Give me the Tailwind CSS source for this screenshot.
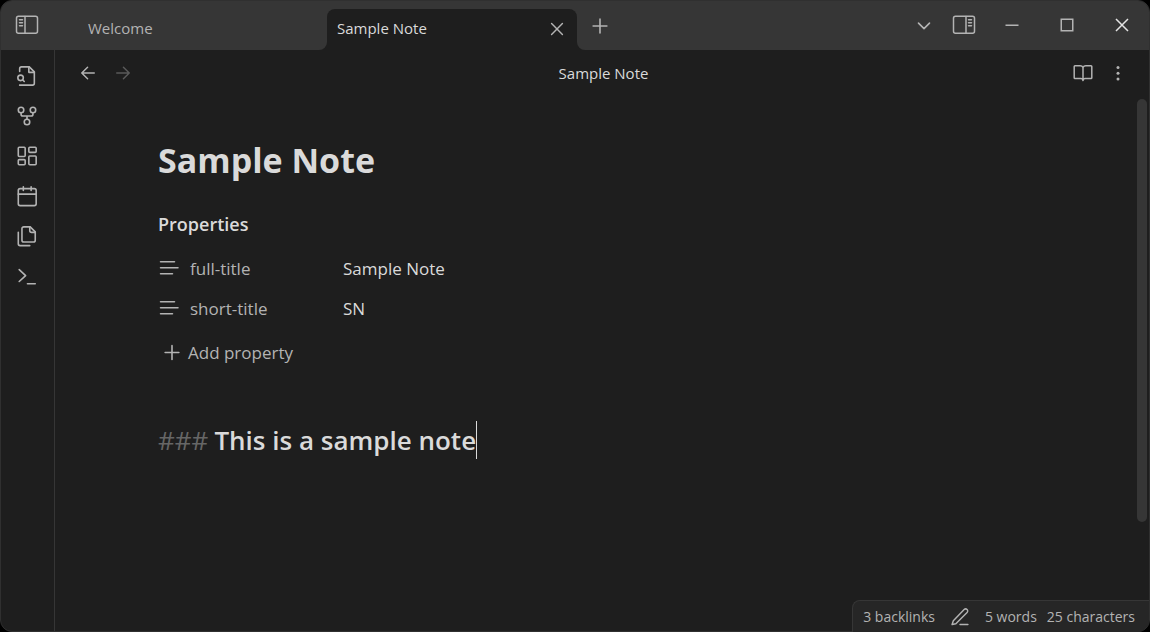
<!DOCTYPE html>
<html lang="en">
<head>
<meta charset="utf-8">
<meta name="viewport" content="width=device-width, initial-scale=1">
<title>Sample Note</title>
<script src="https://cdn.jsdelivr.net/npm/@tailwindcss/browser@4"></script>
</head>
<body class="bg-black font-['Open_Sans','Noto_Sans',sans-serif] text-[#dadada]">
<div class="flex min-h-screen flex-col overflow-hidden rounded-xl border border-[#303030] bg-[#1e1e1e]">

  <header class="flex h-[49px] shrink-0 bg-[#363636] text-[#b3b3b3]">
    <button type="button" aria-label="Collapse left sidebar" class="flex w-[52px] items-center justify-center pb-px">
      <svg class="h-5 w-6" viewBox="0 0 24 20" fill="none" stroke="currentColor" stroke-width="1.5" stroke-linecap="round"><rect x="1.5" y="1.25" width="21" height="17" rx="2"/><path d="M10 1.5v16.5M4.500 4.8h3M4.500 7.8h3M4.500 10.8h3"/></svg>
    </button>
    <div role="tablist" class="ml-[25px] flex items-end pt-2">
      <button type="button" role="tab" aria-selected="false" class="flex h-full w-[249px] items-center px-[10px] pb-[2px] text-[15px]">Welcome</button>
      <div class="relative flex h-full w-[250px] items-center justify-between rounded-t-lg bg-[#1e1e1e] px-[10px] pb-[2px] text-[15px] text-[#dadada]">
        <span class="absolute bottom-0 -left-2 size-2 overflow-hidden bg-[#1e1e1e]"><span class="block size-full rounded-br-lg bg-[#363636]"></span></span>
        <span class="absolute -right-2 bottom-0 size-2 overflow-hidden bg-[#1e1e1e]"><span class="block size-full rounded-bl-lg bg-[#363636]"></span></span>
        <button type="button" role="tab" aria-selected="true">Sample Note</button>
        <button type="button" aria-label="Close tab" class="text-[#b3b3b3]">
          <svg class="size-5" viewBox="0 0 24 24" fill="none" stroke="currentColor" stroke-width="1.75" stroke-linecap="round"><path d="m18.500 5.500-13 13M5.500 5.500l13 13"/></svg>
        </button>
      </div>
    </div>
    <button type="button" aria-label="New tab" class="ml-[11px] flex w-6 items-center justify-center">
      <svg class="size-[22px]" viewBox="0 0 24 24" fill="none" stroke="currentColor" stroke-width="1.75" stroke-linecap="round"><path d="M4.500 12h15M12 4.500v15"/></svg>
    </button>
    <div class="ml-auto flex pb-px">
      <button type="button" aria-label="Tab list" class="flex w-[38px] items-center justify-center">
        <svg class="size-[22px]" viewBox="0 0 24 24" fill="none" stroke="currentColor" stroke-width="1.75" stroke-linecap="round" stroke-linejoin="round"><path d="m6 10 6 6 6-6"/></svg>
      </button>
      <button type="button" aria-label="Expand right sidebar" class="flex w-[42px] items-center justify-center">
        <svg class="h-5 w-6" viewBox="0 0 24 20" fill="none" stroke="currentColor" stroke-width="1.5" stroke-linecap="round"><rect x="1.5" y="1.25" width="21" height="17" rx="2"/><path d="M14 1.5v16.5M16.500 4.8h3M16.500 7.8h3M16.500 10.8h3"/></svg>
      </button>
      <button type="button" aria-label="Minimize" class="flex w-[54px] items-center justify-center">
        <svg class="size-[14px]" viewBox="0 0 14 14" stroke="currentColor" stroke-width="1.5"><path d="M.5 7.2h13"/></svg>
      </button>
      <button type="button" aria-label="Maximize" class="flex w-14 items-center justify-center">
        <svg class="size-[14px]" viewBox="0 0 14 14" fill="none" stroke="currentColor" stroke-width="1.5"><rect x="1.25" y="1.25" width="11.5" height="11.5"/></svg>
      </button>
      <button type="button" aria-label="Close window" class="flex w-[54px] items-center justify-center text-[#e4e4e4]">
        <svg class="size-[14px]" viewBox="0 0 14 14" stroke="currentColor" stroke-width="1.5"><path d="m1 1 12 12M13 1 1 13"/></svg>
      </button>
    </div>
  </header>

  <div class="flex grow">
    <nav aria-label="Ribbon" class="flex w-[54px] shrink-0 flex-col border-r border-[#363636] pt-[6px] pr-px text-[#b3b3b3]">
      <button type="button" aria-label="Open quick switcher" class="flex h-10 items-center justify-center">
        <svg class="size-[22px]" viewBox="0 0 24 24" fill="none" stroke="currentColor" stroke-width="1.75" stroke-linecap="round" stroke-linejoin="round"><path d="M4 22h14a2 2 0 0 0 2-2V7.5L14.5 2H6a2 2 0 0 0-2 2v3"/><path d="M14 2v6h6"/><circle cx="5" cy="14" r="3"/><path d="m9 18-1.5-1.5"/></svg>
      </button>
      <button type="button" aria-label="Open graph view" class="flex h-10 items-center justify-center">
        <svg class="size-[22px]" viewBox="0 0 24 24" fill="none" stroke="currentColor" stroke-width="1.75" stroke-linecap="round" stroke-linejoin="round"><circle cx="12" cy="18.500" r="3"/><circle cx="5.500" cy="5.500" r="3"/><circle cx="18.500" cy="5.500" r="3"/><path d="M18.500 8.500V10a2 2 0 0 1-2 2h-9a2 2 0 0 1-2-2V8.500M12 12v3.500"/></svg>
      </button>
      <button type="button" aria-label="Create new canvas" class="flex h-10 items-center justify-center">
        <svg class="size-[22px]" viewBox="0 0 24 24" fill="none" stroke="currentColor" stroke-width="1.75" stroke-linejoin="round"><rect x="2.500" y="2.500" width="7.500" height="10" rx="1"/><rect x="14" y="2.500" width="8" height="5.500" rx="1"/><rect x="14" y="12" width="8" height="9.500" rx="1"/><rect x="2.500" y="16" width="7.500" height="5.500" rx="1"/></svg>
      </button>
      <button type="button" aria-label="Open today's daily note" class="flex h-10 items-center justify-center">
        <svg class="size-[22px]" viewBox="0 0 24 24" fill="none" stroke="currentColor" stroke-width="1.75" stroke-linecap="round" stroke-linejoin="round"><rect x="2.500" y="4" width="19.500" height="18.500" rx="2"/><path d="M16.500 2v4M8 2v4M2.500 10H22"/></svg>
      </button>
      <button type="button" aria-label="Insert template" class="flex h-10 items-center justify-center">
        <svg class="size-[22px]" viewBox="0 0 24 24" fill="none" stroke="currentColor" stroke-width="1.75" stroke-linecap="round" stroke-linejoin="round"><path d="M15.500 2H8.500a2 2 0 0 0-2 2v12.500a2 2 0 0 0 2 2H19a2 2 0 0 0 2-2V7.500z"/><path d="M2.500 8v12.500a2 2 0 0 0 2 2H15"/><path d="M15 2v4a2 2 0 0 0 2 2h4"/></svg>
      </button>
      <button type="button" aria-label="Open command palette" class="flex h-10 items-center justify-center">
        <svg class="size-[22px]" viewBox="0 0 24 24" fill="none" stroke="currentColor" stroke-width="1.75" stroke-linecap="round" stroke-linejoin="round"><path d="m3.500 18 7-6.500-7-6.500M12.500 20.500H21"/></svg>
      </button>
    </nav>

    <main class="flex min-w-0 grow flex-col">
      <div class="flex h-[47px] shrink-0 items-center pb-px text-[#b3b3b3]">
        <div class="flex flex-1 pl-4">
          <button type="button" aria-label="Navigate back" class="flex w-[34px] justify-center">
            <svg class="size-5" viewBox="0 0 24 24" fill="none" stroke="currentColor" stroke-width="1.75" stroke-linecap="round" stroke-linejoin="round"><path d="m11.500 19-7-7 7-7M19.500 12h-15"/></svg>
          </button>
          <button type="button" aria-label="Navigate forward" disabled class="flex w-9 justify-center text-[#5a5a5a]">
            <svg class="size-5" viewBox="0 0 24 24" fill="none" stroke="currentColor" stroke-width="1.75" stroke-linecap="round" stroke-linejoin="round"><path d="M4.500 12h15M12.500 5l7 7-7 7"/></svg>
          </button>
        </div>
        <div class="text-[15px] text-[#dadada]">Sample Note</div>
        <div class="flex flex-1 justify-end pr-[13px]">
          <button type="button" aria-label="Switch to reading view" class="flex w-9 justify-center">
            <svg class="h-5 w-[22px]" viewBox="0 0 22 20" fill="none" stroke="currentColor" stroke-width="1.5" stroke-linecap="round" stroke-linejoin="round"><path d="M12 4.500v13M12 4.500q-.8-1.800-2.800-1.800H4q-.8 0-.8.800v11.300q0 .8.800.8h6q1.500 0 2 1.900q.5-1.900 2-1.900h6q.8 0 .8-.8V3.500q0-.8-.8-.8h-5.200q-2 0-2.800 1.800"/></svg>
          </button>
          <button type="button" aria-label="More options" class="flex w-9 justify-center">
            <svg class="size-5" viewBox="0 0 20 20" fill="currentColor"><circle cx="10" cy="4.500" r="1.500"/><circle cx="10" cy="10.300" r="1.500"/><circle cx="10" cy="16.100" r="1.500"/></svg>
          </button>
        </div>
      </div>

      <div class="flex grow">
        <article class="min-w-0 grow pt-[39px] pl-[103px]">
          <h1 class="text-[34px] leading-[48px] font-bold">Sample Note</h1>
          <section aria-labelledby="props">
            <h2 id="props" class="mt-7 text-[18px] leading-6 font-semibold">Properties</h2>
            <div class="mt-[13px] text-[17px]">
              <div class="flex h-10 items-center">
                <label for="full" class="flex w-[185px] items-center gap-[10px] text-[#b3b3b3]">
                  <svg class="size-[22px]" viewBox="0 0 22 22" stroke="currentColor" stroke-width="1.5" stroke-linecap="round"><path d="M2.500 3.700h14M2.500 9.700h17.500M2.500 15.700h12"/></svg>full-title</label>
                <input id="full" type="text" value="Sample Note" class="min-w-0 grow bg-transparent outline-none">
              </div>
              <div class="flex h-10 items-center">
                <label for="short" class="flex w-[185px] items-center gap-[10px] text-[#b3b3b3]">
                  <svg class="size-[22px]" viewBox="0 0 22 22" stroke="currentColor" stroke-width="1.5" stroke-linecap="round"><path d="M2.500 3.700h14M2.500 9.700h17.500M2.500 15.700h12"/></svg>short-title</label>
                <input id="short" type="text" value="SN" class="min-w-0 grow bg-transparent outline-none">
              </div>
            </div>
            <button type="button" class="mt-1 flex h-10 items-center gap-[5px] pl-[3px] text-[17px] text-[#b3b3b3]">
              <svg class="size-[22px]" viewBox="0 0 24 24" fill="none" stroke="currentColor" stroke-width="1.75" stroke-linecap="round"><path d="M4.500 11.500h15M12 4v15"/></svg>Add property</button>
          </section>
          <h3 class="mt-12 flex h-[38px] items-center text-[26px] leading-[38px] font-semibold"><span class="mr-[6px] font-normal text-[#666666]">###</span>This is a sample note<span class="h-full w-px bg-[#dadada]"></span></h3>
        </article>
        <div class="mt-[2px] mr-[2px] mb-[109px] w-[10px] shrink-0 rounded-full bg-[#363636]"></div>
      </div>
    </main>
  </div>

  <footer class="fixed right-px bottom-0 flex h-8 items-center rounded-tl-lg rounded-br-xl border-t border-l border-[#363636] bg-[#262626] pr-[14px] pl-[10px] text-[14px] text-[#b3b3b3]">
    <button type="button">3 backlinks</button>
    <button type="button" aria-label="Editing view" class="mx-[15px]">
      <svg class="size-5" viewBox="0 0 24 24" fill="none" stroke="currentColor" stroke-width="1.75" stroke-linecap="round" stroke-linejoin="round"><path d="M12 21h9.500M17 3a2.120 2.120 0 0 1 3.500 3.500L7 20l-4.500 1L4 16.500Z"/></svg>
    </button>
    <span class="mr-[10px]">5 words</span>
    <span>25 characters</span>
  </footer>
</div>
</body>
</html>
